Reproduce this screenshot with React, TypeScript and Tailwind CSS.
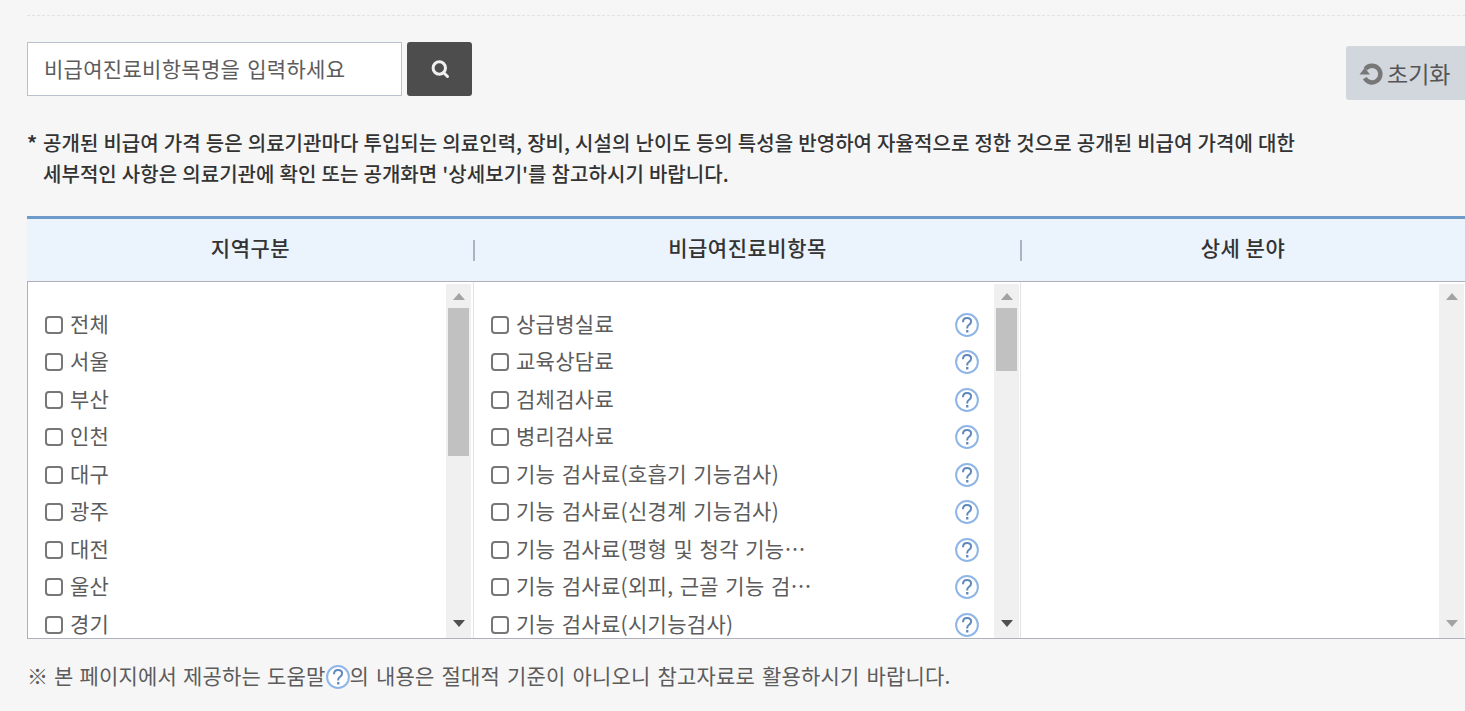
import React from "react";

const font = { fontFamily: '"Noto Sans CJK KR", "Noto Sans", sans-serif' };

function Help({ className = "" }: { className?: string }) {
  return (
    <svg width="24" height="24" viewBox="0 0 24 24" className={className}>
      <circle cx="12" cy="12" r="10.9" fill="#fff" stroke="#8fb6e6" strokeWidth="2" />
      <path d="M8 9.3c0-2.6 1.8-4.2 4.1-4.2 2.3 0 4 1.5 4 3.5 0 1.6-.9 2.4-2 3.2-1.1.8-1.9 1.5-1.9 3v.7" fill="none" stroke="#5f88bd" strokeWidth="2" />
      <rect x="11.1" y="17" width="2.3" height="2.5" fill="#5f88bd" />
    </svg>
  );
}

function Scrollbar({ thumbH, disabled }: { thumbH: string; disabled?: boolean }) {
  return (
    <div className="w-[25px] shrink-0 h-full bg-[#f0f0f0] flex flex-col items-center mt-[2px]">
      <div className="h-[24px] w-full shrink-0 flex items-center justify-center">
        <svg width="12" height="7" viewBox="0 0 12 7"><path d="M6 0l6 7H0z" fill="#a3a3a3" /></svg>
      </div>
      <div className={`w-[21px] bg-[#c1c1c1] ${thumbH}`} />
      <div className="flex-1" />
      <div className="h-[24px] w-full shrink-0 flex items-center justify-center mb-[5px]">
        <svg width="12" height="7" viewBox="0 0 12 7"><path d="M6 7L0 0h12z" fill={disabled ? "#a3a3a3" : "#505050"} /></svg>
      </div>
    </div>
  );
}

function Row({ label, help }: { label: string; help?: boolean }) {
  return (
    <div className="h-[37.5px] flex items-center shrink-0">
      <span className="w-[18px] h-[18px] border-2 border-[#777] rounded-[4px] bg-white shrink-0" />
      <span className="ml-[7px] pb-[3px] text-[21px] text-[#5c5c5c] whitespace-nowrap tracking-[0.3px] [word-spacing:1.4px]">{label}</span>
      {help && <Help className="ml-auto shrink-0" />}
    </div>
  );
}

const regions = ["전체", "서울", "부산", "인천", "대구", "광주", "대전", "울산", "경기"];
const items = [
  "상급병실료",
  "교육상담료",
  "검체검사료",
  "병리검사료",
  "기능 검사료(호흡기 기능검사)",
  "기능 검사료(신경계 기능검사)",
  "기능 검사료(평형 및 청각 기능…",
  "기능 검사료(외피, 근골 기능 검…",
  "기능 검사료(시기능검사)",
];

function HeaderCell({ children, sep, className }: { children: string; sep?: boolean; className: string }) {
  return (
    <div className={`relative h-full flex items-center justify-center pb-[4px] text-[21px] tracking-[0.5px] font-medium text-[#333] ${className}`}>
      {children}
      {sep && <span className="absolute right-[-1px] top-[21px] h-[21px] w-[2px] bg-[#a9b4c2]" />}
    </div>
  );
}

export default function App() {
  return (
    <div style={font} className="w-[1465px] h-[711px] overflow-hidden bg-[#f6f6f6] pl-[27px] pt-[15px]">
      <div className="h-px border-t border-dashed border-[#e2e2e2]" />
      <div className="flex mt-[26px] h-[58px]">
        <div className="w-[375px] h-[54px] border border-[#b8c2cf] bg-white flex items-center pl-[16px] text-[21px] tracking-[0.3px] [word-spacing:2px] text-[#5c5c5c]">
          비급여진료비항목명을 입력하세요
        </div>
        <button className="ml-[5px] w-[65px] h-[54px] bg-[#4d4d4d] rounded-[3px] flex items-center justify-center">
          <svg width="20" height="20" viewBox="0 0 20 20" fill="none">
            <circle cx="9.3" cy="9" r="6.2" stroke="#f0f0f0" strokeWidth="3" />
            <path d="M13.5 13.5l4 4" stroke="#f0f0f0" strokeWidth="3" strokeLinecap="round" />
          </svg>
        </button>
        <button className="ml-auto mt-[4px] w-[119px] h-[54px] bg-[#d2d6dd] rounded-l-[3px] flex items-center pl-[12px] text-[23px] text-[#555]">
          <svg width="25" height="25" viewBox="0 0 24 24" fill="none" className="shrink-0">
            <path d="M7.2 7.6A8 8 0 1 1 6.5 16.5" stroke="#777" strokeWidth="4.2" />
            <path d="M1.5 13h10L6.5 6.5z" fill="#777" />
          </svg>
          <span className="ml-[4px]">초기화</span>
        </button>
      </div>

      <div className="mt-[27px] text-[20px] tracking-[0.05px] [word-spacing:0.5px] font-medium text-[#333] leading-[31px] flex">
        <span className="w-[16px] shrink-0 font-bold">*</span>
        <p className="whitespace-nowrap">
          공개된 비급여 가격 등은 의료기관마다 투입되는 의료인력, 장비, 시설의 난이도 등의 특성을 반영하여 자율적으로 정한 것으로 공개된 비급여 가격에 대한
          <br />
          세부적인 사항은 의료기관에 확인 또는 공개화면 '상세보기'를 참고하시기 바랍니다.
        </p>
      </div>

      <div className="mt-[27px] border-t-[3px] border-[#6f9bcb]">
        <div className="flex h-[62px] bg-[#ebf3fc]">
          <HeaderCell sep className="w-[447px]">지역구분</HeaderCell>
          <HeaderCell sep className="w-[547px]">비급여진료비항목</HeaderCell>
          <HeaderCell className="flex-1">상세 분야</HeaderCell>
        </div>
        <div className="flex h-[358px] border border-r-0 border-[#aeb0bc] bg-white overflow-hidden">
          <div className="w-[446px] h-full flex border-r border-[#e3e3e3] pr-[2px]">
            <div className="flex-1 pl-[17px] pr-[4px] pt-[24px] flex flex-col overflow-hidden">
              {regions.map((r) => <Row key={r} label={r} />)}
            </div>
            <Scrollbar thumbH="h-[148px]" />
          </div>
          <div className="w-[547px] h-full flex border-r border-[#e3e3e3] pr-[1px]">
            <div className="flex-1 pl-[17px] pr-[15px] pt-[24px] flex flex-col overflow-hidden">
              {items.map((r) => <Row key={r} label={r} help />)}
            </div>
            <Scrollbar thumbH="h-[63px]" />
          </div>
          <div className="flex-1 h-full flex justify-end pr-[1px]">
            <Scrollbar thumbH="h-0" disabled />
          </div>
        </div>
      </div>

      <div className="mt-[24px] flex items-center text-[21px] tracking-[0.2px] text-[#5c5c5c] whitespace-nowrap h-[28px]">
        <span className="pb-[2px] [word-spacing:1px]">※ 본 페이지에서 제공하는 도움말</span>
        <Help className="shrink-0" />
        <span className="pb-[2px] [word-spacing:2px]">의 내용은 절대적 기준이 아니오니 참고자료로 활용하시기 바랍니다.</span>
      </div>
    </div>
  );
}
